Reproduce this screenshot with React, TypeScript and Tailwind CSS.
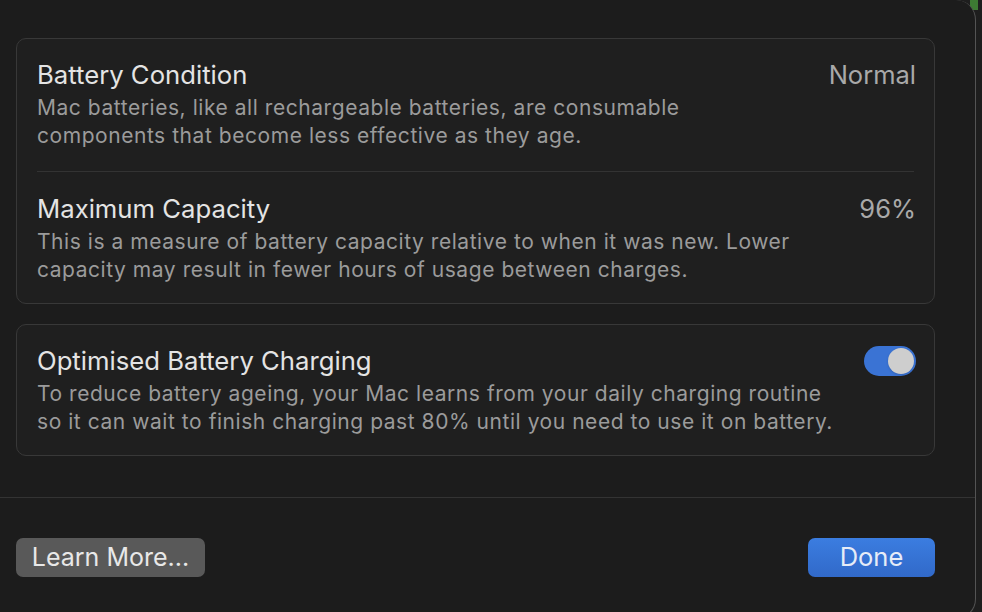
export default function App() {
	const font = { fontFamily: 'Inter, "Noto Sans", sans-serif' };

	return (
		<div className="w-[982px] h-[612px] overflow-hidden bg-[#1e1e1e] relative" style={font}>
			{/* green sliver behind window corner */}
			<div className="absolute right-[4px] top-0 w-[8px] h-[10px] bg-[#3d7a33]" />

			{/* Sheet window */}
			<div className="relative w-[976px] h-[619px] bg-[#1c1c1c] border-r border-b border-[#545454] rounded-tr-[20px] rounded-br-[20px] flex flex-col">
				<div className="pl-4 pr-10 pt-[38px]">
					{/* Health card */}
					<div className="rounded-[10px] border border-[#383838] bg-[#1f1f1f] px-5 pt-[22px] pb-[19px]">
						<Row
							title="Battery Condition"
							value="Normal"
							lines={[
								"Mac batteries, like all rechargeable batteries, are consumable",
								"components that become less effective as they age.",
							]}
						/>
						<div className="h-px bg-[#333333] mt-[21px] mb-[23px]" />
						<Row
							title="Maximum Capacity"
							value="96%"
							lines={[
								"This is a measure of battery capacity relative to when it was new. Lower",
								"capacity may result in fewer hours of usage between charges.",
							]}
						/>
					</div>

					{/* Charging card */}
					<div className="mt-5 rounded-[10px] border border-[#383838] bg-[#1f1f1f] px-5 pt-[22px] pb-[19px]">
						<div className="flex justify-between items-start">
							<div>
								<div className="text-[25.7px] leading-[28px] text-[#e4e4e4] mb-[5px]">Optimised Battery Charging</div>
								<div className="text-[21px] leading-[28px] tracking-[0.55px] text-[#9b9b9b]">
									<div>To reduce battery ageing, your Mac learns from your daily charging routine</div>
									<div>so it can wait to finish charging past 80% until you need to use it on battery.</div>
								</div>
							</div>
							<div className="-mt-[1px] -mr-[2px] w-[52px] h-[30px] rounded-full bg-[#3a73d4] flex items-center justify-end pr-[2px] shrink-0">
								<div className="w-[26px] h-[26px] rounded-full bg-[#cecece] shadow-sm" />
							</div>
						</div>
					</div>
				</div>

				<div className="mt-[41px] h-px bg-[#333333]" />

				<div className="pl-4 pr-10 pt-[40px] flex justify-between">
					<button className="h-[39px] w-[189px] rounded-[7px] bg-[#595959] text-[25px] text-[#e8e8e8]">
						Learn More...
					</button>
					<button className="h-[39px] w-[127px] rounded-[7px] bg-gradient-to-b from-[#3b7de0] to-[#3169c9] text-[25.5px] text-[#e6ecf7]">
						Done
					</button>
				</div>
			</div>
		</div>
	);
}

function Row({ title, value, lines }: { title: string; value: string; lines: string[] }) {
	return (
		<div className="flex justify-between items-start">
			<div>
				<div className="text-[25.7px] leading-[28px] text-[#e4e4e4] mb-[5px]">{title}</div>
				<div className="text-[21px] leading-[28px] tracking-[0.55px] text-[#9b9b9b]">
					{lines.map((l) => (
						<div key={l}>{l}</div>
					))}
				</div>
			</div>
			<div className="-mr-[2px] text-[25.5px] leading-[28px] text-[#a9a9a9]">{value}</div>
		</div>
	);
}
